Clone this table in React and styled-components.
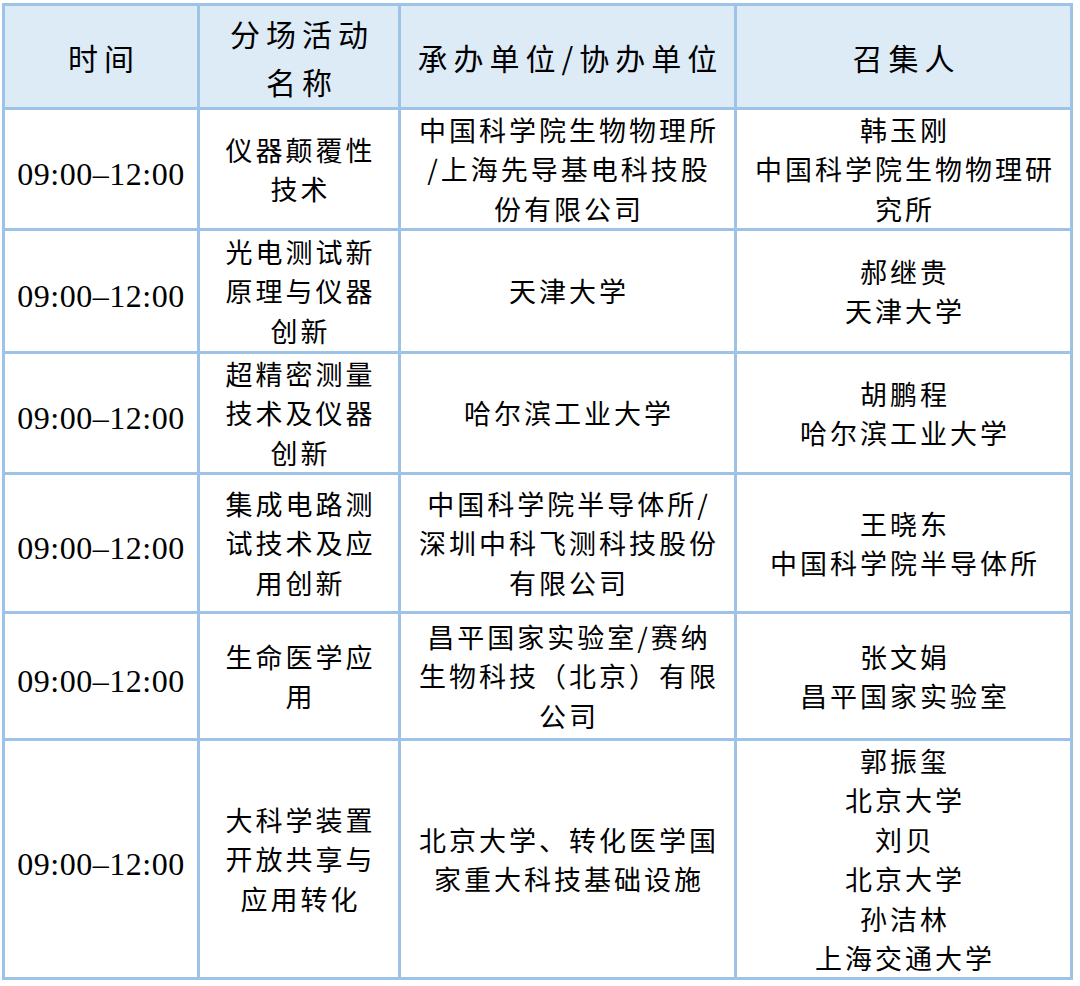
import React from "react";
import styled, { createGlobalStyle } from "styled-components";

const GlobalStyle = createGlobalStyle`
  html, body {
    margin: 0;
    padding: 0;
    background: #ffffff;
  }
  body {
    font-family: "Noto Sans CJK SC", "Noto Sans", sans-serif;
    color: #000;
  }
`;

const Table = styled.div`
  display: grid;
  grid-template-columns: 192px 198px 333px 333px;
  grid-template-rows: 101px 118px 120px 118px 136px 124px 236px;
  gap: 3px;
  padding: 3px;
  width: max-content;
  margin: 3px 0 0 2px;
  background: #9dc3e6;
`;

const Cell = styled.div`
  display: flex;
  align-items: center;
  justify-content: center;
  text-align: center;
  background: ${(p) => (p.$head ? "#ddebf7" : "#ffffff")};
  font-family: "Noto Sans CJK SC", sans-serif;
  font-size: ${(p) => (p.$head ? "30px" : "27px")};
  letter-spacing: ${(p) => (p.$head ? "6px" : "3px")};
  line-height: ${(p) => (p.$head ? "48px" : "39.5px")};
  padding-left: ${(p) => (p.$head ? "6px" : "3px")};
  box-sizing: border-box;
  white-space: nowrap;
`;

const TimeCell = styled.div`
  display: flex;
  align-items: center;
  justify-content: center;
  background: #ffffff;
  font-family: "Liberation Serif", "Times New Roman", serif;
  font-size: 32px;
  letter-spacing: 0.5px;
  padding-top: 10px;
  box-sizing: border-box;
  white-space: nowrap;
`;

const Lines = ({ lines }) =>
  lines.map((l, i) => (
    <React.Fragment key={i}>
      {i > 0 && <br />}
      {l}
    </React.Fragment>
  ));

const header = [["时间"], ["分场活动", "名称"], ["承办单位/协办单位"], ["召集人"]];

const rows = [
  {
    name: ["仪器颠覆性", "技术"],
    org: ["中国科学院生物物理所", "/上海先导基电科技股", "份有限公司"],
    people: ["韩玉刚", "中国科学院生物物理研", "究所"],
  },
  {
    name: ["光电测试新", "原理与仪器", "创新"],
    org: ["天津大学"],
    people: ["郝继贵", "天津大学"],
  },
  {
    name: ["超精密测量", "技术及仪器", "创新"],
    org: ["哈尔滨工业大学"],
    people: ["胡鹏程", "哈尔滨工业大学"],
  },
  {
    name: ["集成电路测", "试技术及应", "用创新"],
    org: ["中国科学院半导体所/", "深圳中科飞测科技股份", "有限公司"],
    people: ["王晓东", "中国科学院半导体所"],
  },
  {
    name: ["生命医学应", "用"],
    org: ["昌平国家实验室/赛纳", "生物科技（北京）有限", "公司"],
    people: ["张文娟", "昌平国家实验室"],
  },
  {
    name: ["大科学装置", "开放共享与", "应用转化"],
    org: ["北京大学、转化医学国", "家重大科技基础设施"],
    people: ["郭振玺", "北京大学", "刘贝", "北京大学", "孙洁林", "上海交通大学"],
  },
];

export default function App() {
  return (
    <>
      <GlobalStyle />
      <Table>
        {header.map((h, i) => (
          <Cell $head key={"h" + i}>
            <div>
              <Lines lines={h} />
            </div>
          </Cell>
        ))}
        {rows.map((r, i) => (
          <React.Fragment key={i}>
            <TimeCell>09:00–12:00</TimeCell>
            <Cell>
              <div>
                <Lines lines={r.name} />
              </div>
            </Cell>
            <Cell>
              <div>
                <Lines lines={r.org} />
              </div>
            </Cell>
            <Cell>
              <div>
                <Lines lines={r.people} />
              </div>
            </Cell>
          </React.Fragment>
        ))}
      </Table>
    </>
  );
}
